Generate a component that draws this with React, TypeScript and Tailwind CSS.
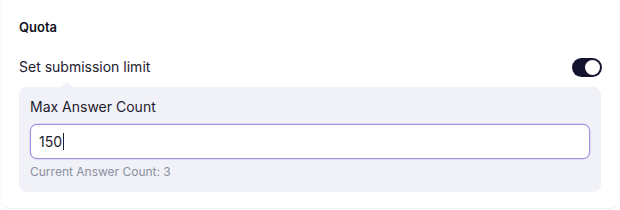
import React from "react";

export default function App() {
  return (
    <div className="w-[620px] h-[210px] bg-white" style={{ fontFamily: "Inter, 'Noto Sans', sans-serif" }}>
      <div className="h-[209px] rounded-b-[10px] border-x border-b border-x-[#fafafb] border-b-[#f2f2f5] px-[18px] pt-[18px]">
        <div className="text-[13px] font-semibold leading-[18px] text-[#111322]">Quota</div>
        <div className="mt-[21px] flex items-center justify-between">
          <span className="text-[14px] leading-[20px] text-[#1d2030]">Set submission limit</span>
          <div className="mr-[-1px] flex h-[19px] w-[30px] items-center justify-end rounded-full bg-[#15142f] pr-[2px]">
            <div className="h-[15px] w-[15px] rounded-full bg-white" />
          </div>
        </div>
        <div className="relative mt-[10px] rounded-[8px] bg-[#f1f2f8] px-[11px] pb-[12px] pt-[10px]">
          <div className="absolute left-[42px] top-[-5px] h-0 w-0 border-x-[6px] border-b-[5px] border-x-transparent border-b-[#f1f2f8]" />
          <div className="text-[14px] leading-[20px] text-[#1d2030]">Max Answer Count</div>
          <div className="mt-[7px] flex h-[35px] items-center rounded-[7px] border border-[#9d93e0] bg-white px-[8px] shadow-[0_0_0_0.5px_#c9c2f2]">
            <span className="text-[14px] text-[#1d2030]">150</span>
            <span className="ml-[1px] h-[17px] w-[1px] bg-[#1d2030]" />
          </div>
          <div className="mt-[5px] text-[12px] leading-[16px] text-[#8b8fa0]">Current Answer Count: 3</div>
        </div>
      </div>
    </div>
  );
}
